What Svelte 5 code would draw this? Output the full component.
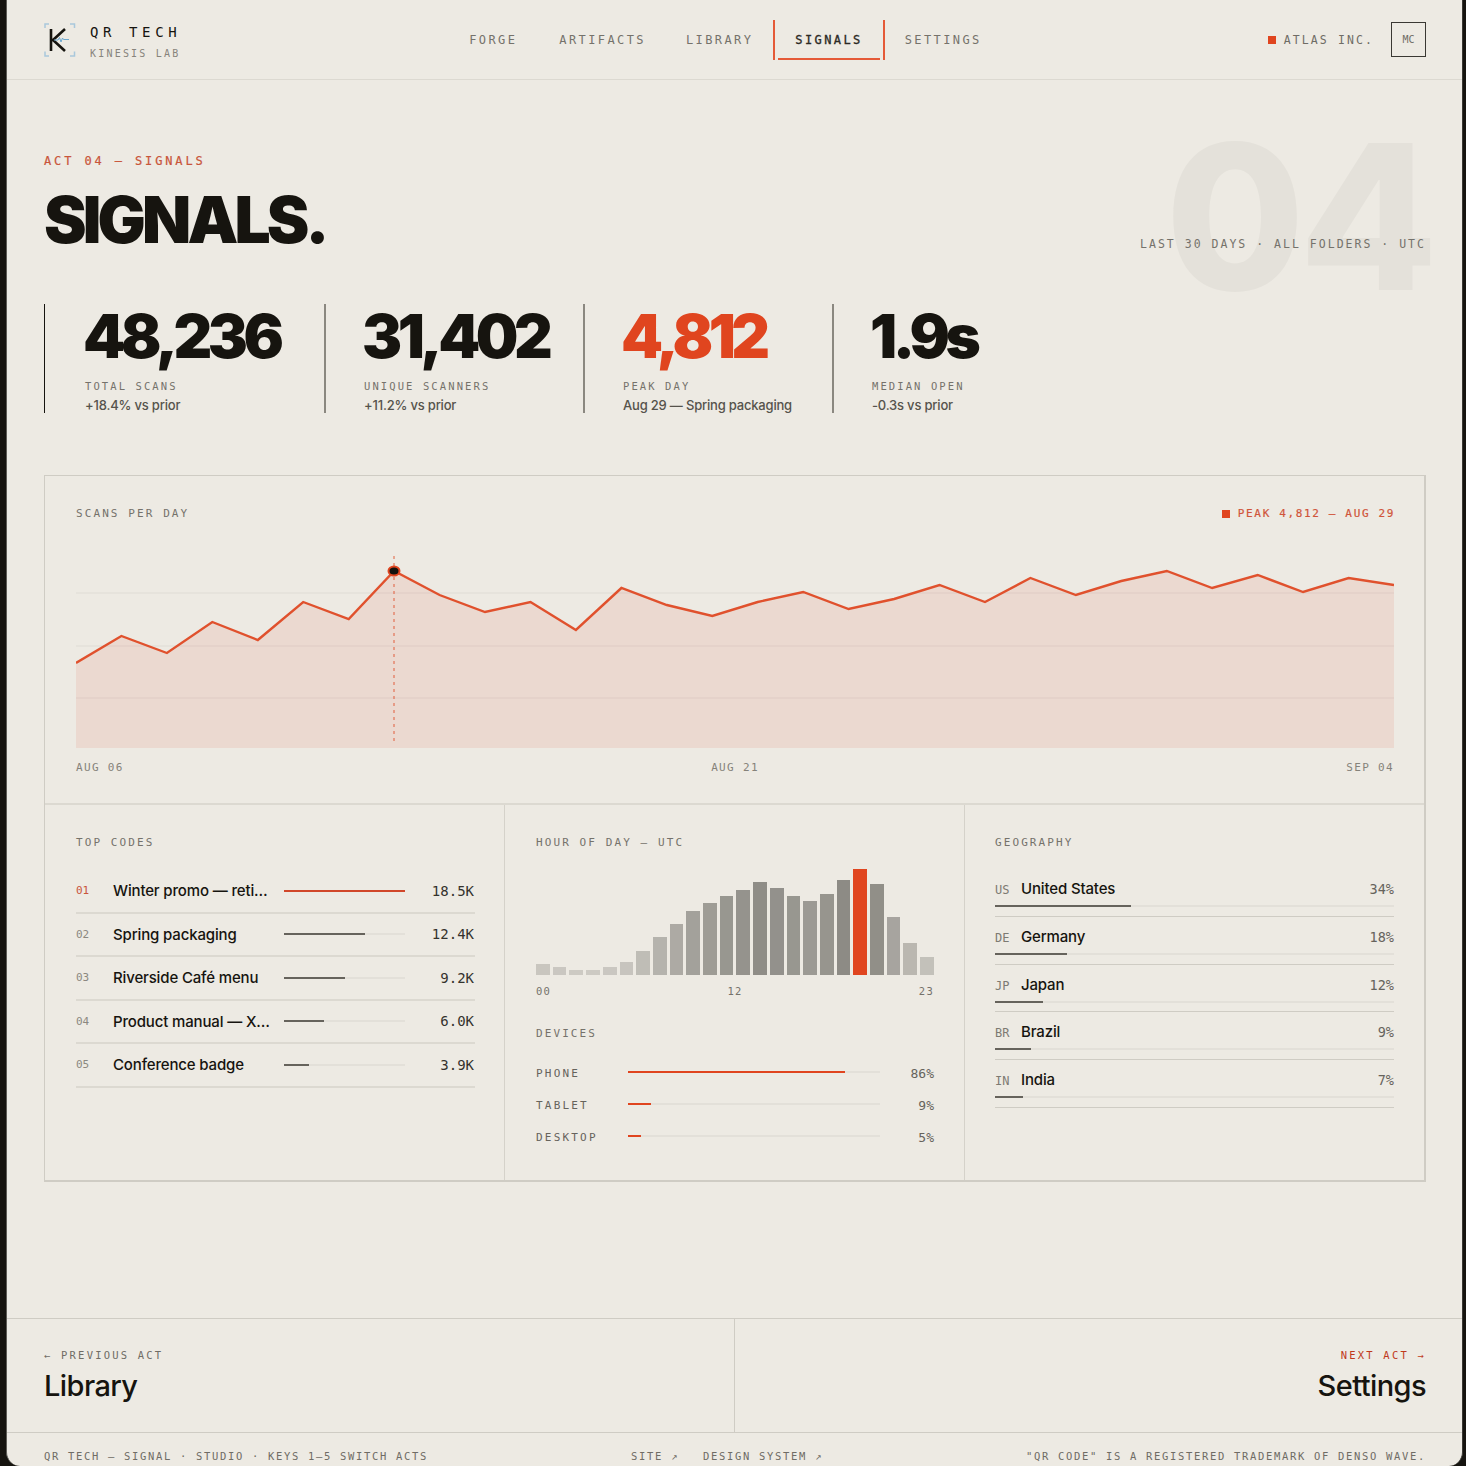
<script lang="ts">
    const nav = ['Forge', 'Artifacts', 'Library', 'Signals', 'Settings'];

    const stats = [
        { value: '48,236', label: 'Total scans', note: '+18.4% vs prior' },
        { value: '31,402', label: 'Unique scanners', note: '+11.2% vs prior' },
        { value: '4,812', label: 'Peak day', note: 'Aug 29 — Spring packaging', hot: true },
        { value: '1.9s', label: 'Median open', note: '-0.3s vs prior' }
    ];

    // chart is drawn in page pixels: 1318 wide, top of svg = page y 548
    const ys = [663, 636, 653, 622, 640, 602, 619, 571, 595, 612, 602, 630, 588, 605, 616, 602, 592, 609, 599, 585, 602, 578, 595, 581, 571, 588, 575, 592, 578, 585];
    const step = 1318 / 29;
    const top = 548;
    const pts = ys.map((y, i) => `${(i * step).toFixed(1)},${y - top}`).join(' ');
    const areaPts = `0,200 ${pts} 1318,200`;

    const codes = [
        { n: '01', name: 'Winter promo — reti…', val: '18.5K', w: 100 },
        { n: '02', name: 'Spring packaging', val: '12.4K', w: 67 },
        { n: '03', name: 'Riverside Café menu', val: '9.2K', w: 50 },
        { n: '04', name: 'Product manual — X…', val: '6.0K', w: 33 },
        { n: '05', name: 'Conference badge', val: '3.9K', w: 21 }
    ];

    const hours = [10.4, 7.6, 5, 5, 7.6, 12.3, 22.8, 35.4, 47.8, 60, 67.7, 75, 80, 87.7, 82, 75, 69.6, 76.9, 89.6, 100, 85.4, 55, 30.4, 17.4];

    const devices = [
        { name: 'Phone', pct: 86 },
        { name: 'Tablet', pct: 9 },
        { name: 'Desktop', pct: 5 }
    ];

    const geo = [
        { code: 'US', name: 'United States', pct: 34 },
        { code: 'DE', name: 'Germany', pct: 18 },
        { code: 'JP', name: 'Japan', pct: 12 },
        { code: 'BR', name: 'Brazil', pct: 9 },
        { code: 'IN', name: 'India', pct: 7 }
    ];
</script>

<div class="frame">
    <header class="topbar">
        <div class="brand">
            <svg class="logo" width="32" height="34" viewBox="0 0 32 34" fill="none">
                <path d="M1 5V1H5M26 1H30.5V5M1 28.5V33H5M26 33H30.5V28.5" stroke="#a9c8dc" stroke-width="1.5" />
                <path d="M7 6V28M21 6L9 17L21 28" stroke="#16140f" stroke-width="2.6" />
                <path d="M10 17H14L15.5 14.5L17 19L18.5 15L19.5 16.5H25" stroke="#6fa9cf" stroke-width="1" />
            </svg>
            <div class="brand-text">
                <div class="brand-name">QR TECH</div>
                <div class="brand-sub">KINESIS LAB</div>
            </div>
        </div>
        <nav class="nav">
            {#each nav as item}
                <span class="nav-item" class:active={item === 'Signals'}>{item}</span>
            {/each}
        </nav>
        <div class="account">
            <span class="dot"></span>
            <span class="org">ATLAS INC.</span>
            <span class="avatar">MC</span>
        </div>
    </header>

    <main class="content">
        <section class="hero">
            <div class="ghost">04</div>
            <div class="eyebrow">ACT 04 — SIGNALS</div>
            <div class="hero-row">
                <h1>SIGNALS.</h1>
                <div class="range">LAST 30 DAYS · ALL FOLDERS · UTC</div>
            </div>
        </section>

        <section class="stats">
            {#each stats as s, i}
                <div class="stat" class:first={i === 0}>
                    <div class="stat-value" class:hot={s.hot}>{s.value}</div>
                    <div class="stat-label">{s.label}</div>
                    <div class="stat-note">{s.note}</div>
                </div>
            {/each}
        </section>

        <section class="board">
            <div class="chart-panel">
                <div class="chart-head">
                    <span class="cap">Scans per day</span>
                    <span class="peak"><i></i>PEAK 4,812 — AUG 29</span>
                </div>
                <svg class="chart" width="1318" height="200" viewBox="0 0 1318 200">
                    <line x1="0" x2="1318" y1="45" y2="45" class="grid" />
                    <line x1="0" x2="1318" y1="98" y2="98" class="grid" />
                    <line x1="0" x2="1318" y1="150" y2="150" class="grid" />
                    <polygon points={areaPts} fill="#e04030" fill-opacity="0.1" />
                    <line x1="318" x2="318" y1="8" y2="196" stroke="#e0451f" stroke-opacity="0.55" stroke-width="1.5" stroke-dasharray="3 4" />
                    <polyline points={pts} fill="none" stroke="#e0512d" stroke-width="2.4" />
                    <ellipse cx="318" cy="23" rx="5.5" ry="4.5" fill="#14120e" stroke="#e0451f" stroke-width="2" />
                </svg>
                <div class="axis">
                    <span>AUG 06</span><span>AUG 21</span><span>SEP 04</span>
                </div>
            </div>

            <div class="cols">
                <div class="col">
                    <div class="cap">Top codes</div>
                    <div class="codes">
                        {#each codes as c, i}
                            <div class="code-row">
                                <span class="code-n" class:hot={i === 0}>{c.n}</span>
                                <span class="code-name">{c.name}</span>
                                <span class="track"><span class="fill" class:red={i === 0} style="width: {c.w}%"></span></span>
                                <span class="code-val">{c.val}</span>
                            </div>
                        {/each}
                    </div>
                </div>

                <div class="col">
                    <div class="cap">Hour of day — UTC</div>
                    <div class="hours">
                        {#each hours as h, i}
                            <span class="hour" class:peak-hour={i === 19} style="height: {h}%; opacity: {i === 19 ? 1 : 0.3 + 0.7 * h / 90}"></span>
                        {/each}
                    </div>
                    <div class="hour-axis"><span>00</span><span>12</span><span>23</span></div>
                    <div class="cap devices-cap">Devices</div>
                    <div class="devices">
                        {#each devices as d}
                            <div class="device">
                                <span class="device-name">{d.name}</span>
                                <span class="device-track"><span class="device-fill" style="width: {d.pct}%"></span></span>
                                <span class="device-pct">{d.pct}%</span>
                            </div>
                        {/each}
                    </div>
                </div>

                <div class="col">
                    <div class="cap">Geography</div>
                    <div class="geo">
                        {#each geo as g}
                            <div class="geo-row">
                                <div class="geo-line">
                                    <span class="geo-code">{g.code}</span>
                                    <span class="geo-name">{g.name}</span>
                                    <span class="geo-pct">{g.pct}%</span>
                                </div>
                                <div class="geo-track"><span class="geo-fill" style="width: {g.pct}%"></span></div>
                            </div>
                        {/each}
                    </div>
                </div>
            </div>
        </section>
    </main>

    <section class="pager">
        <div class="pager-cell">
            <div class="pager-cap">← PREVIOUS ACT</div>
            <div class="pager-title">Library</div>
        </div>
        <div class="pager-cell right">
            <div class="pager-cap next">NEXT ACT →</div>
            <div class="pager-title">Settings</div>
        </div>
    </section>

    <footer class="foot">
        <span>QR TECH — SIGNAL · STUDIO · KEYS 1–5 SWITCH ACTS</span>
        <span class="foot-links"><span>SITE ↗</span><span>DESIGN SYSTEM ↗</span></span>
        <span>"QR CODE" IS A REGISTERED TRADEMARK OF DENSO WAVE.</span>
    </footer>
</div>

<style>
    :global(body) {
        margin: 0;
        background: #16140f;
    }

    .frame {
        --ink: #16140f;
        --mono: 'DejaVu Sans Mono', 'Liberation Mono', monospace;
        --sans: Inter, 'Liberation Sans', sans-serif;
        box-sizing: border-box;
        width: 1457px;
        height: 1466px;
        margin-left: 6px;
        overflow: hidden;
        border-left: 1px solid #5e5c56;
        border-right: 1px solid #3a3833;
        border-bottom-left-radius: 14px;
        border-bottom-right-radius: 14px;
        background: #edeae3;
        color: var(--ink);
        font-family: var(--sans);
        display: flex;
        flex-direction: column;
    }

    .topbar {
        height: 80px;
        flex: none;
        box-sizing: border-box;
        border-bottom: 1px solid #dcd9d1;
        padding: 0 36px 0 37px;
        display: flex;
        justify-content: space-between;
        align-items: center;
    }

    .brand {
        display: flex;
        align-items: center;
        gap: 14px;
    }

    .brand-text {
        padding-top: 4px;
    }

    .brand-name {
        font: 400 14px var(--mono);
        letter-spacing: 4.6px;
        line-height: 16px;
    }

    .brand-sub {
        margin-top: 8px;
        font: 400 10px var(--mono);
        letter-spacing: 2.2px;
        line-height: 12px;
        color: #87847c;
    }

    .nav {
        display: flex;
        align-items: stretch;
        height: 40px;
        margin-left: 2px;
    }

    .nav-item {
        display: flex;
        align-items: center;
        padding: 1px 20px 0;
        font: 400 12px var(--mono);
        letter-spacing: 0.2em;
        text-transform: uppercase;
        color: #75726b;
    }

    .nav-item:first-child {
        padding-right: 22px;
    }

    .nav-item.active {
        position: relative;
        color: #2b2924;
        -webkit-text-stroke: 0.3px currentColor;
        border-left: 2px solid #e55a38;
        border-right: 2px solid #e55a38;
    }

    .nav-item.active::after {
        content: '';
        position: absolute;
        left: 3px;
        right: 3px;
        bottom: 0;
        height: 2px;
        background: #e55a38;
    }

    .account {
        display: flex;
        align-items: center;
        justify-content: flex-end;
    }

    .dot {
        width: 8px;
        height: 8px;
        background: #e0451f;
        margin-right: 8px;
    }

    .org {
        font: 400 11.5px var(--mono);
        letter-spacing: 2.1px;
        color: #6f6c65;
        margin-right: 17px;
    }

    .avatar {
        box-sizing: border-box;
        width: 35px;
        height: 35px;
        border: 1px solid #3a3833;
        display: flex;
        align-items: center;
        justify-content: center;
        font: 400 10px var(--mono);
        color: #6f6c65;
    }

    .content {
        flex: 1;
        padding: 0 36px 0 37px;
    }

    .hero {
        position: relative;
        padding-top: 74px;
    }

    .ghost {
        position: absolute;
        right: -6px;
        top: 36px;
        font: 800 202px/1 var(--sans);
        letter-spacing: -0.03em;
        color: #e4e1da;
    }

    .eyebrow {
        position: relative;
        font: 400 12px/14px var(--mono);
        letter-spacing: 0.24em;
        color: #c9553a;
        -webkit-text-stroke: 0.2px currentColor;
    }

    .hero-row {
        position: relative;
        display: flex;
        justify-content: space-between;
        align-items: flex-end;
        margin-top: 16px;
    }

    h1 {
        margin: 0;
        font: 900 64px/72px var(--sans);
        letter-spacing: -0.06em;
    }

    .range {
        font: 400 11.5px/14px var(--mono);
        letter-spacing: 0.175em;
        color: #75726b;
        margin-bottom: 5px;
    }

    .stats {
        display: grid;
        grid-template-columns: 280px 259px 249px auto;
        margin-top: 48px;
        height: 109px;
    }

    .stat {
        border-left: 2px solid #8b8880;
        padding-left: 38px;
    }

    .stat.first {
        border-left: 1px solid var(--ink);
        padding-left: 40px;
    }

    .stat-value {
        margin-left: -2px;
        padding-top: 1px;
        font: 900 60px/62px var(--sans);
        letter-spacing: -0.075em;
    }

    .stat-value.hot {
        color: #e0451f;
    }

    .stat-label {
        margin-top: 12px;
        font: 400 10.5px/14px var(--mono);
        letter-spacing: 0.2em;
        text-transform: uppercase;
        color: #75726b;
    }

    .stat-note {
        margin-top: 4px;
        font: 500 13px/16px var(--sans);
        letter-spacing: -0.015em;
        color: #56534c;
    }

    .board {
        margin-top: 62px;
        border: 1px solid #cfccc4;
        border-bottom-width: 2px;
        border-right-width: 2px;
    }

    .chart-panel {
        padding: 31px 30px 28px 31px;
        border-bottom: 2px solid #dcd9d1;
    }

    .chart-head {
        display: flex;
        justify-content: space-between;
        align-items: center;
        height: 14px;
    }

    .cap {
        font: 400 11px/14px var(--mono);
        letter-spacing: 0.19em;
        text-transform: uppercase;
        color: #75726b;
    }

    .peak {
        display: flex;
        align-items: center;
        margin-right: -1px;
        font: 400 11px/14px var(--mono);
        letter-spacing: 0.15em;
        color: #d0543a;
        -webkit-text-stroke: 0.2px currentColor;
    }

    .peak i {
        width: 8px;
        height: 8px;
        background: #e0451f;
        margin-right: 8px;
    }

    .chart {
        display: block;
        margin-top: 27px;
    }

    .grid {
        stroke: #16140f;
        stroke-opacity: 0.04;
        stroke-width: 1.5;
    }

    .axis {
        display: flex;
        justify-content: space-between;
        margin-top: 13px;
        font: 400 11px/14px var(--mono);
        letter-spacing: 0.12em;
        color: #85827a;
    }

    .cols {
        display: grid;
        grid-template-columns: 459px 460px 1fr;
        height: 375px;
    }

    .col {
        padding: 31px 30px 0 31px;
        border-left: 1px solid #d5d2ca;
    }

    .col:first-child {
        border-left: 0;
        padding-right: 29px;
    }

    .col:last-child {
        padding-left: 30px;
    }

    .codes {
        margin-top: 20px;
    }

    .code-row {
        box-sizing: border-box;
        display: grid;
        grid-template-columns: 37px 171px 121px 1fr;
        align-items: center;
        height: 43.5px;
        border-bottom: 2px solid #dcd9d1;
    }

    .code-n {
        font: 400 11px var(--mono);
        color: #8b8880;
    }

    .code-n.hot {
        color: #c9553a;
    }

    .code-name {
        font: 500 15px var(--sans);
        letter-spacing: -0.01em;
        white-space: nowrap;
    }

    .track {
        height: 2px;
        background: #e3e0d9;
        display: block;
    }

    .fill {
        display: block;
        height: 100%;
        background: #66635c;
    }

    .fill.red {
        background: #d1472a;
    }

    .code-val {
        margin-right: 1px;
        text-align: right;
        font: 400 14px var(--mono);
        color: #34322d;
    }

    .hours {
        display: flex;
        gap: 3px;
        align-items: flex-end;
        height: 106px;
        margin-top: 19px;
    }

    .hour {
        flex: 1;
        background: #8d8b85;
    }

    .hour.peak-hour {
        background: #e0451f;
    }

    .hour-axis {
        display: flex;
        justify-content: space-between;
        margin-top: 9px;
        font: 400 10.5px/14px var(--mono);
        letter-spacing: 0.12em;
        color: #75726b;
    }

    .devices-cap {
        margin-top: 29px;
    }

    .devices {
        margin-top: 16px;
    }

    .device {
        display: grid;
        grid-template-columns: 92px 252px 1fr;
        align-items: center;
        height: 32px;
    }

    .device-name {
        font: 400 11px var(--mono);
        letter-spacing: 0.2em;
        text-transform: uppercase;
        color: #66635c;
    }

    .device-track {
        height: 2px;
        margin-top: -3px;
        background: #e3e0d9;
        display: block;
    }

    .device-fill {
        display: block;
        height: 100%;
        background: #e0451f;
    }

    .device-pct {
        text-align: right;
        font: 400 13px var(--mono);
        color: #66635c;
    }

    .geo {
        margin-top: 19px;
    }

    .geo-row {
        height: 47.8px;
        box-sizing: border-box;
        border-bottom: 1px solid #cfccc4;
    }

    .geo-line {
        display: flex;
        align-items: baseline;
        height: 35px;
        padding-top: 10px;
        box-sizing: border-box;
    }

    .geo-code {
        width: 26px;
        font: 400 12px var(--mono);
        color: #7d7a72;
    }

    .geo-name {
        flex: 1;
        font: 500 15px var(--sans);
        letter-spacing: -0.01em;
    }

    .geo-pct {
        font: 400 13.5px var(--mono);
        color: #66635c;
    }

    .geo-track {
        height: 2px;
        margin-top: 1px;
        background: #e3e0d9;
    }

    .geo-fill {
        display: block;
        height: 100%;
        background: #66635c;
    }

    .pager {
        flex: none;
        height: 113px;
        display: grid;
        grid-template-columns: 727px 1fr;
        border-top: 1px solid #cfccc4;
        border-bottom: 1px solid #cfccc4;
    }

    .pager-cell {
        padding: 29px 37px 0;
    }

    .pager-cell.right {
        border-left: 1px solid #cfccc4;
        text-align: right;
        padding-right: 36px;
    }

    .pager-cap {
        font: 400 10.5px/14px var(--mono);
        letter-spacing: 0.21em;
        color: #6f6c65;
    }

    .pager-cap.next {
        color: #c0391b;
    }

    .pager-title {
        margin-top: 6px;
        font: 500 29px/36px var(--sans);
        letter-spacing: -0.02em;
    }

    .foot {
        flex: none;
        height: 33px;
        padding: 16px 36px 0 37px;
        box-sizing: border-box;
        display: flex;
        justify-content: space-between;
        font: 400 10.5px/14px var(--mono);
        letter-spacing: 0.16em;
        color: #6f6c65;
        white-space: nowrap;
    }

    .foot-links {
        display: flex;
        gap: 24px;
    }
</style>
